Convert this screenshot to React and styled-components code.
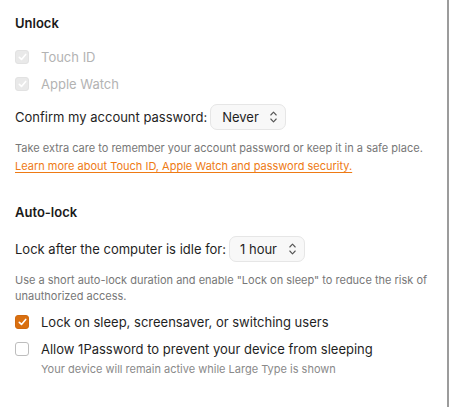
import React from "react";
import styled, { createGlobalStyle } from "styled-components";

const Global = createGlobalStyle`
  html, body { margin: 0; padding: 0; background: #ffffff; }
  body { font-family: Inter, "Noto Sans", sans-serif; color: #1f1f1f; -webkit-font-smoothing: antialiased; }
`;

const Frame = styled.div`
  width: 450px;
  height: 407px;
  display: flex;
  box-sizing: border-box;
  overflow: hidden;
`;

const Content = styled.div`
  flex: 1;
  padding: 13px 0 0 15px;
  display: flex;
  flex-direction: column;
`;

const Scrollbar = styled.div`
  width: 2px;
  margin-right: 1px;
  background: #9c9c9c;
`;

const Heading = styled.h2`
  margin: ${(p) => p.$mt || 0}px 0 0;
  font-size: 13px;
  font-weight: 600;
  line-height: 20px;
  color: #1a1a1a;
`;

const Section = styled.section`
  display: flex;
  flex-direction: column;
`;

const CheckRow = styled.label`
  display: flex;
  align-items: flex-start;
  gap: 12px;
  margin-top: ${(p) => p.$mt || 0}px;
  font-size: 13px;
  line-height: 16px;
  color: ${(p) => (p.$disabled ? "#b3b3b3" : "#1f1f1f")};
`;

const Box = styled.span`
  flex: none;
  width: 14px;
  height: 14px;
  margin-top: 1px;
  box-sizing: border-box;
  border-radius: 3px;
  display: flex;
  align-items: center;
  justify-content: center;
  background: ${(p) => (p.$state === "on" ? "#d96f10" : p.$state === "disabled" ? "#e9e9e9" : "#ffffff")};
  border: 1px solid ${(p) => (p.$state === "on" ? "#d0690e" : p.$state === "disabled" ? "#e2e2e2" : "#bdbdbd")};
  svg { display: block; }
`;

const CheckText = styled.span`
  display: flex;
  flex-direction: column;
`;

const SubText = styled.span`
  font-size: 11px;
  line-height: 14px;
  color: #8a8a8a;
  margin-top: 5px;
`;

const SelectRow = styled.div`
  display: flex;
  align-items: center;
  gap: 3px;
  margin-top: ${(p) => p.$mt || 0}px;
  font-size: 13px;
  color: #1f1f1f;
`;

const Select = styled.div`
  height: 26px;
  box-sizing: border-box;
  padding: 0 8px 0 ${(p) => p.$pl || 11}px;
  display: flex;
  align-items: center;
  gap: ${(p) => p.$gap || 11}px;
  border: 1px solid #e6e6e6;
  border-radius: 7px;
  background: #f8f8f8;
  font-size: 13px;
  color: #1f1f1f;
`;

const Help = styled.p`
  margin: ${(p) => p.$mt || 0}px 0 0;
  font-size: 11px;
  line-height: ${(p) => p.$lh || 16}px;
  color: #777777;
  width: 420px;
`;

const Link = styled.a`
  color: #ee7a14;
  text-decoration: underline;
  text-underline-offset: 2px;
`;

const Tick = ({ color }) => (
  <svg width="9" height="8" viewBox="0 0 9 8">
    <path d="M1.3 4.3 L3.5 6.4 L7.7 1.4" fill="none" stroke={color} strokeWidth="1.6" strokeLinecap="round" strokeLinejoin="round" />
  </svg>
);

const Chevrons = () => (
  <svg width="7" height="12" viewBox="0 0 7 12">
    <path d="M0.8 4 L3.5 1.2 L6.2 4 M0.8 8 L3.5 10.8 L6.2 8" fill="none" stroke="#555" strokeWidth="1.1" strokeLinecap="round" strokeLinejoin="round" />
  </svg>
);

export default function App() {
  return (
    <>
      <Global />
      <Frame>
        <Content>
          <Section>
            <Heading>Unlock</Heading>
            <CheckRow $disabled $mt={16}>
              <Box $state="disabled"><Tick color="#ffffff" /></Box>
              <CheckText>Touch ID</CheckText>
            </CheckRow>
            <CheckRow $disabled $mt={11}>
              <Box $state="disabled"><Tick color="#ffffff" /></Box>
              <CheckText>Apple Watch</CheckText>
            </CheckRow>
            <SelectRow $mt={12}>
              Confirm my account password:
              <Select>
                Never
                <Chevrons />
              </Select>
            </SelectRow>
            <Help $mt={9} $lh={18}>
              Take extra care to remember your account password or keep it in a safe place.
              <br />
              <Link href="#">Learn more about Touch ID, Apple Watch and password security.</Link>
            </Help>
          </Section>
          <Section>
            <Heading $mt={27}>Auto-lock</Heading>
            <SelectRow $mt={14}>
              Lock after the computer is idle for:
              <Select $pl={10} $gap={12}>
                1 hour
                <Chevrons />
              </Select>
            </SelectRow>
            <Help $mt={10}>
              Use a short auto-lock duration and enable "Lock on sleep" to reduce the risk of unauthorized access.
            </Help>
            <CheckRow $mt={10}>
              <Box $state="on"><Tick color="#ffffff" /></Box>
              <CheckText>Lock on sleep, screensaver, or switching users</CheckText>
            </CheckRow>
            <CheckRow $mt={11}>
              <Box $state="off" />
              <CheckText>
                Allow 1Password to prevent your device from sleeping
                <SubText>Your device will remain active while Large Type is shown</SubText>
              </CheckText>
            </CheckRow>
          </Section>
        </Content>
        <Scrollbar />
      </Frame>
    </>
  );
}
